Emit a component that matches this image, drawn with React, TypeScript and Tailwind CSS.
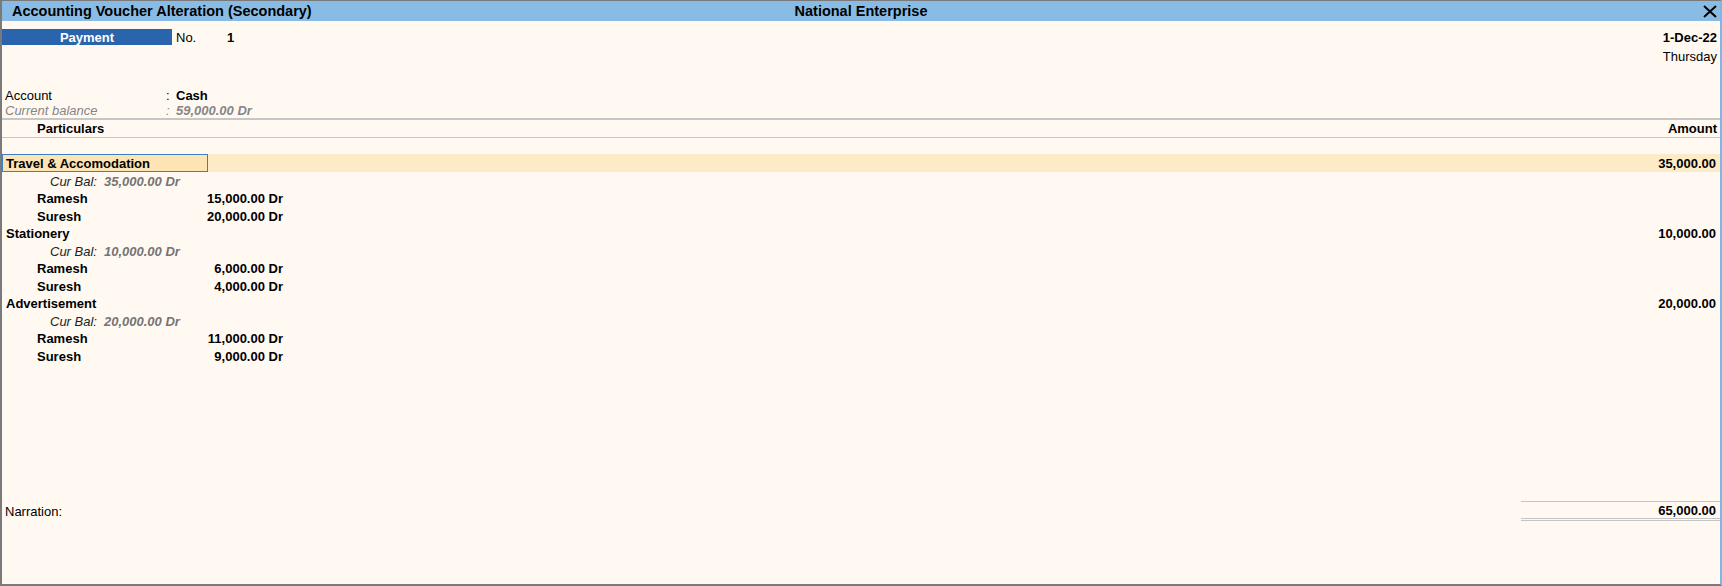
import React from 'react'

type Bill = { name: string; amount: string }
type Ledger = { name: string; amount: string; curBal: string; bills: Bill[] }

const ledgers: Ledger[] = [
  {
    name: 'Travel & Accomodation',
    amount: '35,000.00',
    curBal: '35,000.00 Dr',
    bills: [
      { name: 'Ramesh', amount: '15,000.00 Dr' },
      { name: 'Suresh', amount: '20,000.00 Dr' },
    ],
  },
  {
    name: 'Stationery',
    amount: '10,000.00',
    curBal: '10,000.00 Dr',
    bills: [
      { name: 'Ramesh', amount: '6,000.00 Dr' },
      { name: 'Suresh', amount: '4,000.00 Dr' },
    ],
  },
  {
    name: 'Advertisement',
    amount: '20,000.00',
    curBal: '20,000.00 Dr',
    bills: [
      { name: 'Ramesh', amount: '11,000.00 Dr' },
      { name: 'Suresh', amount: '9,000.00 Dr' },
    ],
  },
]

function LedgerBlock({ ledger, active }: { ledger: Ledger; active: boolean }) {
  return (
    <div>
      {/* ledger line */}
      <div className={`flex h-[17.5px] items-center ${active ? 'bg-[#fdebc7]' : ''}`}>
        <div
          className={`flex h-full w-[206px] shrink-0 items-center pt-[2px] font-bold ${
            active ? 'border border-[#3c7fc2] bg-[#fde4b4] pl-[3px]' : 'pl-[4px]'
          }`}
        >
          {ledger.name}
        </div>
        <div className="flex-1 pt-[2px] pr-[4px] text-right font-bold">{ledger.amount}</div>
      </div>
      {/* current balance */}
      <div className="flex h-[17.5px] items-center pt-[2px] italic">
        <span className="w-[102px] shrink-0 whitespace-nowrap pl-[48px] text-[#222]">Cur Bal:</span>
        <span className="font-bold text-[#747474]">{ledger.curBal}</span>
      </div>
      {/* bill-wise rows */}
      {ledger.bills.map((b, i) => (
        <div key={i} className="flex h-[17.5px] items-center pt-[2px] font-bold">
          <span className="w-[150px] shrink-0 pl-[35px]">{b.name}</span>
          <span className="w-[131px] shrink-0 text-right">{b.amount}</span>
        </div>
      ))}
    </div>
  )
}

export default function App() {
  return (
    <div className="flex h-[586px] w-[1722px] flex-col border-t border-b-2 border-l-2 border-r-2 border-t-[#7a7a7a] border-b-[#7a7a7a] border-l-[#7a7a7a] border-r-[#80b6e2] bg-[#fff9f2] font-['Liberation_Sans',Arial,sans-serif] text-[13px] leading-none text-black">
      {/* title bar */}
      <div className="grid h-[20px] shrink-0 grid-cols-[1fr_auto_1fr] items-center bg-[#88bce5] text-[14.5px] font-bold">
        <div className="pl-[10px]">Accounting Voucher Alteration (Secondary)</div>
        <div>National Enterprise</div>
        <div className="flex justify-end pr-[3px]">
          <svg width="14" height="13" viewBox="0 0 14 13" className="mt-[1px]">
            <path d="M1 1 L13 12 M13 1 L1 12" stroke="#000" strokeWidth="2" fill="none" />
          </svg>
        </div>
      </div>

      <div className="flex flex-1 flex-col">
        {/* voucher type, number and date */}
        <div className="mt-[8px] flex h-[16px] items-center">
          <div className="flex h-full w-[170px] items-center justify-center bg-[#2a64ad] font-bold text-white">
            Payment
          </div>
          <span className="ml-[4px] w-[51px]">No.</span>
          <span className="font-bold">1</span>
          <span className="ml-auto pr-[3px] font-bold">1-Dec-22</span>
        </div>
        <div className="mt-[3px] flex h-[16px] items-center justify-end pr-[3px]">Thursday</div>

        {/* account */}
        <div className="mt-[23px] flex h-[16px] items-center">
          <span className="w-[164px] pl-[3px]">Account</span>
          <span className="w-[10px]">:</span>
          <span className="font-bold">Cash</span>
        </div>
        <div className="flex h-[15px] items-center italic text-[#858585]">
          <span className="w-[164px] pl-[3px]">Current balance</span>
          <span className="w-[10px]">:</span>
          <span className="font-bold">59,000.00 Dr</span>
        </div>
        <div className="h-[2px] bg-[#c6c6c6]" />

        {/* column headings */}
        <div className="flex h-[17px] items-center font-bold">
          <span className="pl-[35px]">Particulars</span>
          <span className="ml-auto pr-[3px]">Amount</span>
        </div>
        <div className="h-px bg-[#c6c6c6]" />

        <div className="mt-[16px]">
          {ledgers.map((l, i) => (
            <LedgerBlock key={l.name} ledger={l} active={i === 0} />
          ))}
        </div>

        {/* narration and total */}
        <div className="mt-auto flex items-start pb-[63px]">
          <span className="mt-[2px] flex h-[16px] items-center pl-[3px]">Narration:</span>
          <div className="ml-auto flex h-[20px] w-[199px] items-center justify-end border-t border-b-[3px] border-double border-[#c4c4c4] pr-[4px] font-bold">
            65,000.00
          </div>
        </div>
      </div>
    </div>
  )
}
